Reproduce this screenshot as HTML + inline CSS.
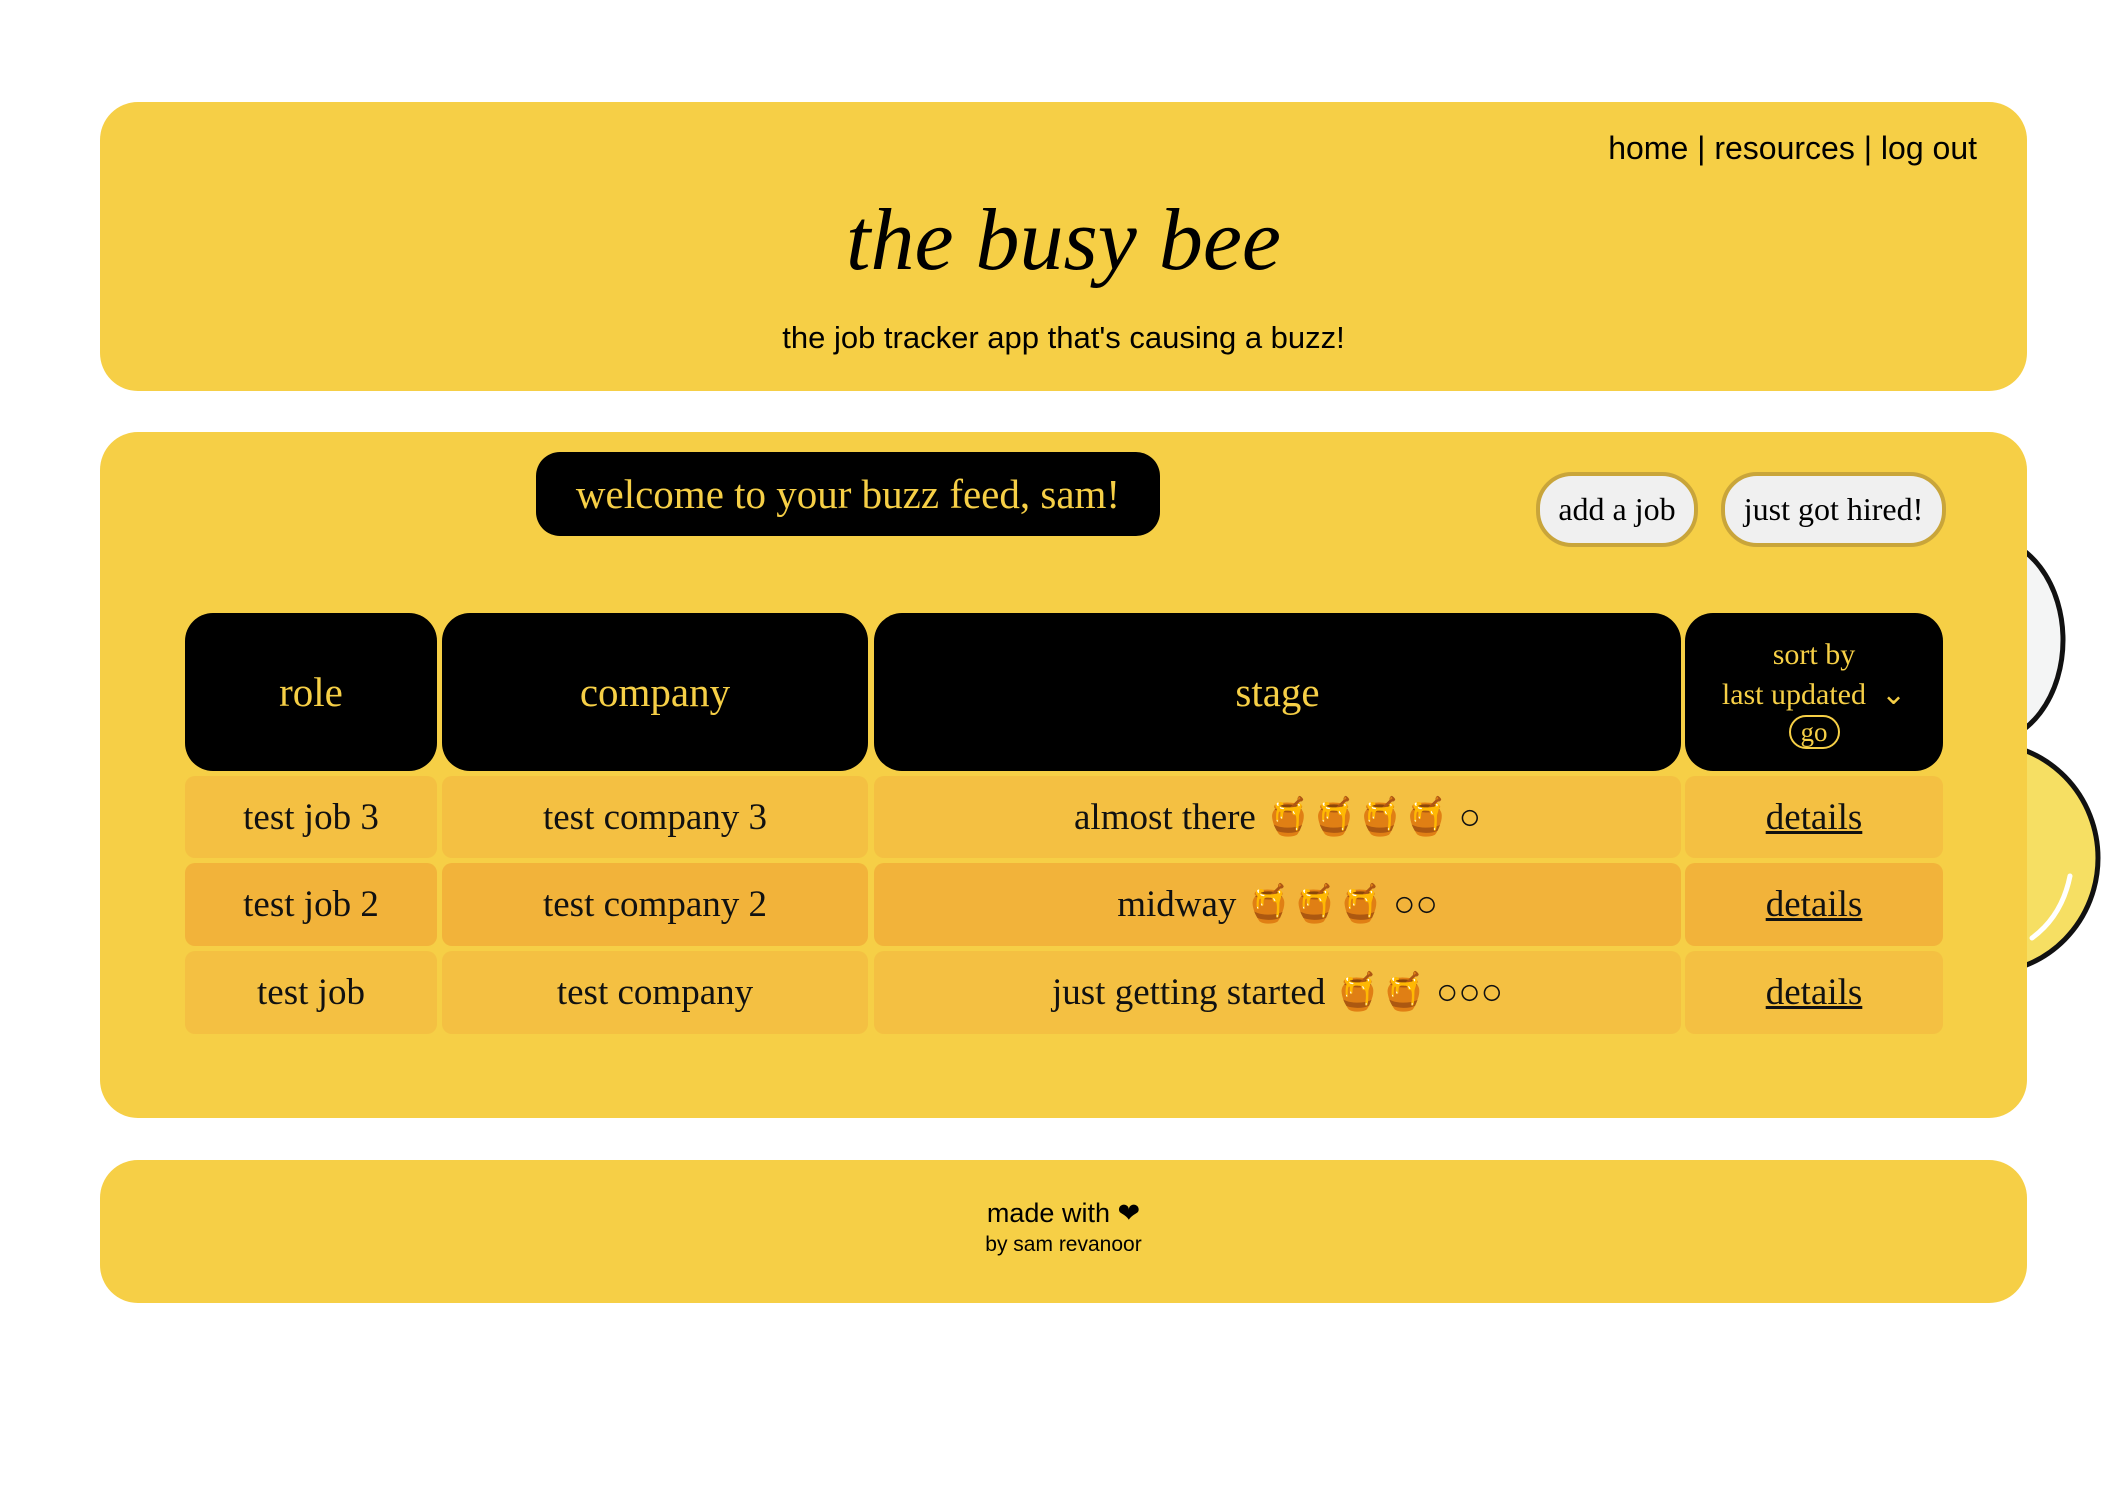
<!DOCTYPE html>
<html><head><meta charset="utf-8"><style>
body{margin:0;width:2128px;height:1496px;background:#fff;position:relative;overflow:hidden;font-family:"Liberation Sans",sans-serif}
.card{position:absolute;left:100px;width:1927px;background:#f6cf46;border-radius:38px}
.cell{position:absolute;display:flex;align-items:center;justify-content:center;font-family:"Liberation Serif",serif;font-size:37px;color:#111;border-radius:10px}
.h{background:#000;color:#f6cf46;border-radius:28px;font-size:41px}
.btn{position:absolute;top:472px;height:67px;background:#f0f0f0;border:4px solid #c9a53a;border-radius:36px;display:flex;align-items:center;justify-content:center;font-family:"Liberation Serif",serif;font-size:32px}
</style></head><body>
<svg style="position:absolute;left:0;top:0" width="2128" height="1496">
<ellipse cx="1985" cy="640" rx="78" ry="103" fill="#f4f5f5" stroke="#111" stroke-width="5"/>
<ellipse cx="1985" cy="858" rx="113" ry="115" fill="#f6df63" stroke="#111" stroke-width="5"/>
<path d="M2070 876 Q2062 916 2032 938" stroke="#fff" stroke-width="5" fill="none" stroke-linecap="round"/>
</svg>
<div class="card" style="top:102px;height:289px">
<div style="position:absolute;right:50px;top:28px;font-size:32px;color:#000">home | resources | log out</div>
<div style="position:absolute;left:0;right:0;top:88px;text-align:center;font-family:'Liberation Serif',serif;font-style:italic;font-size:88px;color:#000">the busy bee</div>
<div style="position:absolute;left:0;right:0;top:218px;text-align:center;font-size:31px;color:#000">the job tracker app that's causing a buzz!</div>
</div>
<div class="card" style="top:432px;height:686px"></div>
<div style="position:absolute;left:536px;top:452px;width:624px;height:84px;background:#000;border-radius:24px;color:#f6cf46;display:flex;align-items:center;justify-content:center;font-family:'Liberation Serif',serif;font-size:41px">welcome to your buzz feed, sam!</div>
<div class="btn" style="left:1536px;width:154px">add a job</div>
<div class="btn" style="left:1721px;width:217px">just got hired!</div>
<div class="cell h" style="left:185px;top:613px;width:252px;height:158px">role</div>
<div class="cell h" style="left:442px;top:613px;width:426px;height:158px">company</div>
<div class="cell h" style="left:874px;top:613px;width:807px;height:158px">stage</div>
<div class="cell h" style="left:1685px;top:613px;width:258px;height:158px;flex-direction:column;font-size:30px;line-height:40px">
<div>sort by</div><div>last updated &nbsp;⌄</div><div style="border:2px solid #f6cf46;border-radius:20px;padding:0 10px;line-height:30px;font-size:27px">go</div></div>
<div class="cell" style="left:185px;top:776px;width:252px;height:82px;background:#f4c042">test job 3</div>
<div class="cell" style="left:442px;top:776px;width:426px;height:82px;background:#f4c042">test company 3</div>
<div class="cell" style="left:874px;top:776px;width:807px;height:82px;background:#f4c042">almost there 🍯🍯🍯🍯 ○</div>
<div class="cell" style="left:1685px;top:776px;width:258px;height:82px;background:#f4c042;text-decoration:underline">details</div>
<div class="cell" style="left:185px;top:863px;width:252px;height:83px;background:#f2b33a">test job 2</div>
<div class="cell" style="left:442px;top:863px;width:426px;height:83px;background:#f2b33a">test company 2</div>
<div class="cell" style="left:874px;top:863px;width:807px;height:83px;background:#f2b33a">midway 🍯🍯🍯 ○○</div>
<div class="cell" style="left:1685px;top:863px;width:258px;height:83px;background:#f2b33a;text-decoration:underline">details</div>
<div class="cell" style="left:185px;top:951px;width:252px;height:83px;background:#f4c042">test job</div>
<div class="cell" style="left:442px;top:951px;width:426px;height:83px;background:#f4c042">test company</div>
<div class="cell" style="left:874px;top:951px;width:807px;height:83px;background:#f4c042">just getting started 🍯🍯 ○○○</div>
<div class="cell" style="left:1685px;top:951px;width:258px;height:83px;background:#f4c042;text-decoration:underline">details</div>
<div class="card" style="top:1160px;height:143px;text-align:center">
<div style="margin-top:38px;font-size:27px">made with ❤</div>
<div style="font-size:21px;margin-top:4px">by sam revanoor</div>
</div>
</body></html>
